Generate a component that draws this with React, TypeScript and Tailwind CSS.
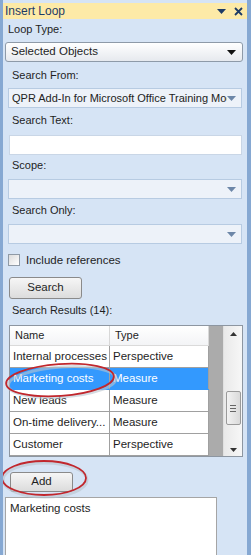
import React from 'react';

const rows = [
  { name: 'Internal processes', type: 'Perspective' },
  { name: 'Marketing costs', type: 'Measure', selected: true },
  { name: 'New leads', type: 'Measure' },
  { name: 'On-time delivery...', type: 'Measure' },
  { name: 'Customer', type: 'Perspective' },
];

function Caret({ color = '#111' }: { color?: string }) {
  return (
    <svg width="9" height="5" viewBox="0 0 9 5" className="shrink-0">
      <path d="M0 0h9L4.5 5z" fill={color} />
    </svg>
  );
}

function FlatSelect({ text }: { text?: string }) {
  return (
    <div className="ml-[5px] mr-[5px] h-[20px] bg-[#edf2f9] border border-[#b7cbe2] flex items-center pl-[3px] pr-[5px]">
      <span className="flex-1 whitespace-nowrap overflow-hidden text-[#222]">{text}</span>
      <Caret color="#6d87a8" />
    </div>
  );
}

export default function App() {
  return (
    <div
      className="relative w-[251px] h-[555px] overflow-hidden bg-[#d6e4f5] border-l-[3px] border-r-[4px] border-[#86a8d2] text-[11px] text-[#1e1e1e]"
      style={{ fontFamily: '"Liberation Sans", Arial, sans-serif' }}
    >
      {/* title */}
      <div className="mt-[3px] h-[16px] bg-[#fdeaa7] flex items-center pl-[2px] pr-[4px] text-[12px] text-[#1d3b66]">
        <span className="flex-1">Insert Loop</span>
        <svg width="9" height="5" viewBox="0 0 9 5" className="mr-[8px]">
          <path d="M0 0h9L4.5 5z" fill="#1d3b66" />
        </svg>
        <svg width="9" height="9" viewBox="0 0 9 9">
          <path d="M1 1l7 7M8 1l-7 7" stroke="#1d3b66" strokeWidth="1.8" />
        </svg>
      </div>

      <div className="h-[23px] pl-[5px] pt-[3px] leading-[14px]">Loop Type:</div>
      <div className="ml-[2px] mr-[4px] h-[20px] rounded-[3px] border border-[#8e9aa8] bg-gradient-to-b from-[#ffffff] to-[#e6e9ee] flex items-center pl-[5px] pr-[6px] text-[11.5px]">
        <span className="flex-1">Selected Objects</span>
        <Caret />
      </div>

      <div className="h-[26px] pl-[9px] flex items-center">Search From:</div>
      <FlatSelect text="QPR Add-In for Microsoft Office Training Model" />

      <div className="h-[27px] pl-[9px] flex items-center pb-[2px]">Search Text:</div>
      <div className="ml-[6px] mr-[5px] h-[20px] bg-white border border-[#c9d6e6]" />

      <div className="h-[24px] pl-[9px] flex items-center pb-[3px]">Scope:</div>
      <FlatSelect />

      <div className="h-[25px] pl-[9px] flex items-center pb-[3px]">Search Only:</div>
      <FlatSelect />

      <div className="h-[33px] flex items-start pl-[5px] pt-[10px] gap-[6px]">
        <div className="w-[12px] h-[12px] border border-[#8f9aa6] bg-gradient-to-br from-[#dcdcdc] to-[#ffffff]" />
        <span className="text-[11.5px] leading-[12px]">Include references</span>
      </div>

      <div className="ml-[6px] w-[73px] h-[22px] rounded-[3px] border border-[#8a8a8a] bg-gradient-to-b from-[#f6f6f6] to-[#dcdcdc] flex items-center justify-center text-[11.5px]">
        Search
      </div>

      <div className="h-[26px] pl-[9px] flex items-center pb-[4px]">Search Results (14):</div>

      {/* results table */}
      <div className="ml-[6px] mr-[4px] h-[132px] border border-[#8d96a1] bg-white flex">
        <div className="w-[199px] flex flex-col">
          <div className="h-[21px] flex border-b border-[#dadada] bg-gradient-to-b from-[#ffffff] to-[#f3f4f6]">
            <div className="w-[100px] pl-[5px] flex items-center border-r border-[#d8d8d8]">Name</div>
            <div className="flex-1 pl-[5px] flex items-center border-r border-[#d8d8d8]">Type</div>
          </div>
          {rows.map((r) => (
            <div
              key={r.name}
              className={
                r.selected
                  ? 'h-[22px] shrink-0 flex bg-[#3399fe] text-white border-b border-[#3399fe]'
                  : 'h-[22px] shrink-0 flex border-b border-[#a0a0a0]'
              }
            >
              <div className="w-[100px] pl-[3px] flex items-center border-r border-[#a0a0a0] whitespace-nowrap overflow-hidden text-[11.5px]">
                {r.name}
              </div>
              <div className="flex-1 pl-[3px] flex items-center border-r border-[#a0a0a0] text-[11.5px]">{r.type}</div>
            </div>
          ))}
        </div>
        <div className="w-[14px] bg-[#ababab]" />
        <div className="flex-1 bg-gradient-to-r from-[#e9e9e9] to-[#f7f7f7] flex flex-col items-center border-l border-[#e0e0e0]">
          <div className="h-[16px] flex items-center">
            <svg width="7" height="4" viewBox="0 0 7 4">
              <path d="M0 4h7L3.5 0z" fill="#333" />
            </svg>
          </div>
          <div className="h-[49px]" />
          <div className="w-[15px] h-[34px] rounded-[2px] border border-[#9a9a9a] bg-gradient-to-r from-[#f2f2f2] to-[#dadada] flex flex-col items-center justify-center gap-[2px]">
            <div className="w-[6px] h-px bg-[#666]" />
            <div className="w-[6px] h-px bg-[#666]" />
            <div className="w-[6px] h-px bg-[#666]" />
          </div>
          <div className="flex-1" />
          <div className="h-[12px] flex items-center">
            <svg width="7" height="4" viewBox="0 0 7 4">
              <path d="M0 0h7L3.5 4z" fill="#333" />
            </svg>
          </div>
        </div>
      </div>

      <div className="ml-[7px] mt-[15px] w-[63px] h-[20px] rounded-[3px] border border-[#8a8a8a] bg-gradient-to-b from-[#f6f6f6] to-[#dcdcdc] flex items-center justify-center text-[11.5px]">
        Add
      </div>

      <div className="ml-[2px] mt-[5px] w-[212px] h-[70px] bg-white border border-[#a5a5a5] pl-[4px] pt-[2px] text-[11.5px]">
        Marketing costs
      </div>

      {/* annotation ellipses */}
      <svg className="absolute left-[-3px] top-0 pointer-events-none" width="251" height="555">
        <ellipse cx="62" cy="382" rx="54" ry="15" fill="none" stroke="#b9c4cf" strokeWidth="3" opacity="0.6" transform="rotate(-4 62 382)" />
        <ellipse cx="60" cy="380" rx="54" ry="16" fill="none" stroke="#c1272d" strokeWidth="1.8" transform="rotate(-4 60 380)" />
        <ellipse cx="45" cy="480" rx="42" ry="17" fill="none" stroke="#b9c4cf" strokeWidth="3" opacity="0.6" />
        <ellipse cx="44" cy="478" rx="42" ry="17" fill="none" stroke="#c1272d" strokeWidth="1.8" />
      </svg>
    </div>
  );
}
